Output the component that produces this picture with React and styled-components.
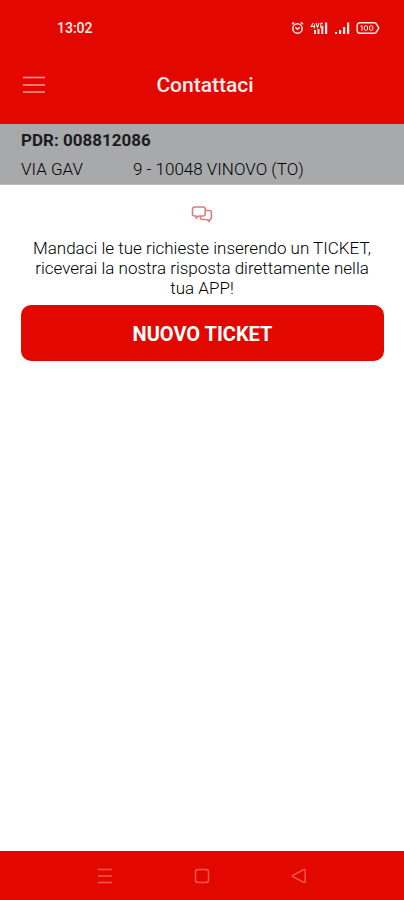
import React from "react";
import styled, { createGlobalStyle } from "styled-components";

const RED = "#e20800";

const GlobalStyle = createGlobalStyle`
  *, *::before, *::after { box-sizing: border-box; }
  body { margin: 0; background: #fff; font-family: Roboto, sans-serif; color: #1c1c1e; }
  button { font: inherit; color: inherit; border: 0; padding: 0; background: none; cursor: pointer; }
  svg { display: block; }
`;

const Screen = styled.div`
  min-height: 100vh;
  display: flex;
  flex-direction: column;
`;

const Header = styled.header`
  background: ${RED};
  color: #ffeceb;
`;

const StatusBar = styled.div`
  display: flex;
  justify-content: space-between;
  align-items: center;
  height: 56px;
  padding: 0 24px 0 57px;
`;

const Clock = styled.time`
  font-size: 14px;
  line-height: 20px;
  font-weight: 500;
`;

const StatusIcons = styled.div`
  display: flex;
  align-items: center;
  gap: 6px;
`;

const TitleBar = styled.div`
  display: grid;
  grid-template-columns: 24px 1fr 24px;
  align-items: center;
  height: 68px;
  padding: 0 16px 11px 22px;
`;

const IconButton = styled.button`
  display: grid;
  place-items: center;
  height: 32px;
`;

const Title = styled.h1`
  margin: 0;
  font-size: 21px;
  line-height: 28px;
  font-weight: 500;
  text-align: center;
`;

const SupplyPoint = styled.section`
  padding: 6px 21px 4px;
  background: #a7a9ab;
  font-size: 17px;
  border-bottom: 1px solid #b9bbbc;
`;

const SupplyCode = styled.p`
  margin: 0 0 8px;
  line-height: 21px;
  font-weight: 700;
`;

const Address = styled.p`
  display: flex;
  gap: 50px;
  margin: 0;
  line-height: 21px;
  font-weight: 300;
  color: #000;
`;

const Main = styled.main`
  flex: 1;
  display: flex;
  flex-direction: column;
  padding: 20px 20px 21px;
`;

const ChatMark = styled.div`
  display: flex;
  justify-content: center;
  margin-bottom: 15px;
`;

const Message = styled.p`
  margin: 0 10px 7px;
  font-size: 17px;
  line-height: 20px;
  font-weight: 300;
  color: #000;
  text-align: center;
`;

const PrimaryButton = styled.button`
  && {
    height: 56px;
    margin: 0 0 0 1px;
    padding-top: 2px;
    border-radius: 10px;
    background: ${RED};
    color: #fff;
    font-size: 20px;
    line-height: 24px;
    font-weight: 700;
  }
`;

const SystemNav = styled.nav`
  display: flex;
  justify-content: center;
  gap: 73px;
  height: 49px;
  background: ${RED};
  color: #f2564d;
`;

const NavButton = styled.button`
  && {
    display: grid;
    place-items: center;
    width: 24px;
    color: inherit;
  }
`;

const AlarmIcon = () => (
  <svg width="13" height="14" viewBox="0 0 13 14" fill="none" stroke="currentColor" strokeWidth="1.5" aria-hidden="true">
    <circle cx="6.5" cy="7.5" r="4.7" />
    <path d="M1 3.2 3.2 1.4M12 3.2 9.8 1.4M4.3 6.2l2.2 2 2.2-2" />
  </svg>
);

const MobileIcon = () => (
  <svg width="18" height="14" viewBox="0 0 18 14" fill="currentColor" aria-hidden="true">
    <path d="M4 9h2v4H4zM7.5 8h2v5h-2zM11.3 6h2v7h-2zM15 1.5h2.2V13H15z" />
    <path d="M3.2 2 1.2 5.5h4M4.4 3.5v4M6 2l1.5 4.4L9 2M12.8 2.4h-2v4h2V4.5" fill="none" stroke="currentColor" strokeWidth="1.1" />
  </svg>
);

const SignalIcon = () => (
  <svg width="16" height="14" viewBox="0 0 16 14" fill="currentColor" aria-hidden="true">
    <path d="M1 11h2.2v2H1zM5 9h2.2v4H5zM9 6h2.2v7H9zM13 1.5h2.2V13H13z" />
  </svg>
);

const BatteryIcon = () => (
  <svg width="24" height="14" viewBox="0 0 24 14" fill="none" stroke="currentColor" aria-hidden="true">
    <path d="M4 1.8h14.5q1.5 0 2 1.4L22.8 7l-2.3 3.8q-.5 1.4-2 1.4H4q-2.8 0-2.8-2.8V4.6Q1.2 1.8 4 1.8Z" strokeWidth="1.5" />
    <path d="M4.5 5.2 6 4.7v5" />
    <rect x="8.3" y="4.8" width="3.2" height="4.5" rx="1.2" />
    <rect x="13.6" y="4.8" width="3.2" height="4.5" rx="1.2" />
  </svg>
);

const MenuIcon = () => (
  <svg width="24" height="20" viewBox="0 0 24 20" fill="none" stroke="#ff9f99" strokeWidth="1.5" aria-hidden="true">
    <path d="M1 2.5h22M1 10h22M1 17h22" />
  </svg>
);

const ChatIcon = () => (
  <svg width="22" height="18" viewBox="0 0 22 18" fill="none" stroke="#d77f80" strokeWidth="1.6" strokeLinejoin="round" aria-hidden="true">
    <path d="M3.5 2h8.7a2 2 0 0 1 2 2v5a2 2 0 0 1-2 2H7.8l-2.6 2.2V11H3.5a2 2 0 0 1-2-2V4a2 2 0 0 1 2-2Z" />
    <path d="M14.2 5.5h4.2a2 2 0 0 1 2 2v5a2 2 0 0 1-2 2v2.2L15.8 14.5H11.5a2 2 0 0 1-2-2V11" />
  </svg>
);

const RecentsIcon = () => (
  <svg width="16" height="16" viewBox="0 0 16 16" fill="none" stroke="currentColor" strokeWidth="1.5" aria-hidden="true">
    <path d="M1 1.5h14M1 8h14M1 14.5h14" />
  </svg>
);

const HomeIcon = () => (
  <svg width="16" height="16" viewBox="0 0 16 16" fill="none" stroke="currentColor" strokeWidth="1.5" aria-hidden="true">
    <rect x="1.5" y="1.5" width="13" height="13" rx="2.5" />
  </svg>
);

const BackIcon = () => (
  <svg width="16" height="16" viewBox="0 0 16 16" fill="none" stroke="currentColor" strokeWidth="1.5" strokeLinejoin="round" aria-hidden="true">
    <path d="M12.8 1.6 1.9 7.3q-1 .7 0 1.4l10.9 5.7q1.4.5 1.4-1V2.6q0-1.5-1.4-1Z" />
  </svg>
);

export default function App() {
  return (
    <Screen>
      <GlobalStyle />
      <Header>
        <StatusBar>
          <Clock>13:02</Clock>
          <StatusIcons>
            <AlarmIcon />
            <MobileIcon />
            <SignalIcon />
            <BatteryIcon />
          </StatusIcons>
        </StatusBar>
        <TitleBar>
          <IconButton type="button" aria-label="Menu">
            <MenuIcon />
          </IconButton>
          <Title>Contattaci</Title>
        </TitleBar>
      </Header>
      <SupplyPoint>
        <SupplyCode>PDR: 008812086</SupplyCode>
        <Address>
          <span>VIA GAV</span>
          <span>9 - 10048 VINOVO (TO)</span>
        </Address>
      </SupplyPoint>
      <Main>
        <ChatMark>
          <ChatIcon />
        </ChatMark>
        <Message>
          Mandaci le tue richieste inserendo un TICKET, riceverai la nostra risposta direttamente nella tua APP!
        </Message>
        <PrimaryButton type="button">NUOVO TICKET</PrimaryButton>
      </Main>
      <SystemNav aria-label="Sistema">
        <NavButton type="button" aria-label="Recenti">
          <RecentsIcon />
        </NavButton>
        <NavButton type="button" aria-label="Home">
          <HomeIcon />
        </NavButton>
        <NavButton type="button" aria-label="Indietro">
          <BackIcon />
        </NavButton>
      </SystemNav>
    </Screen>
  );
}
